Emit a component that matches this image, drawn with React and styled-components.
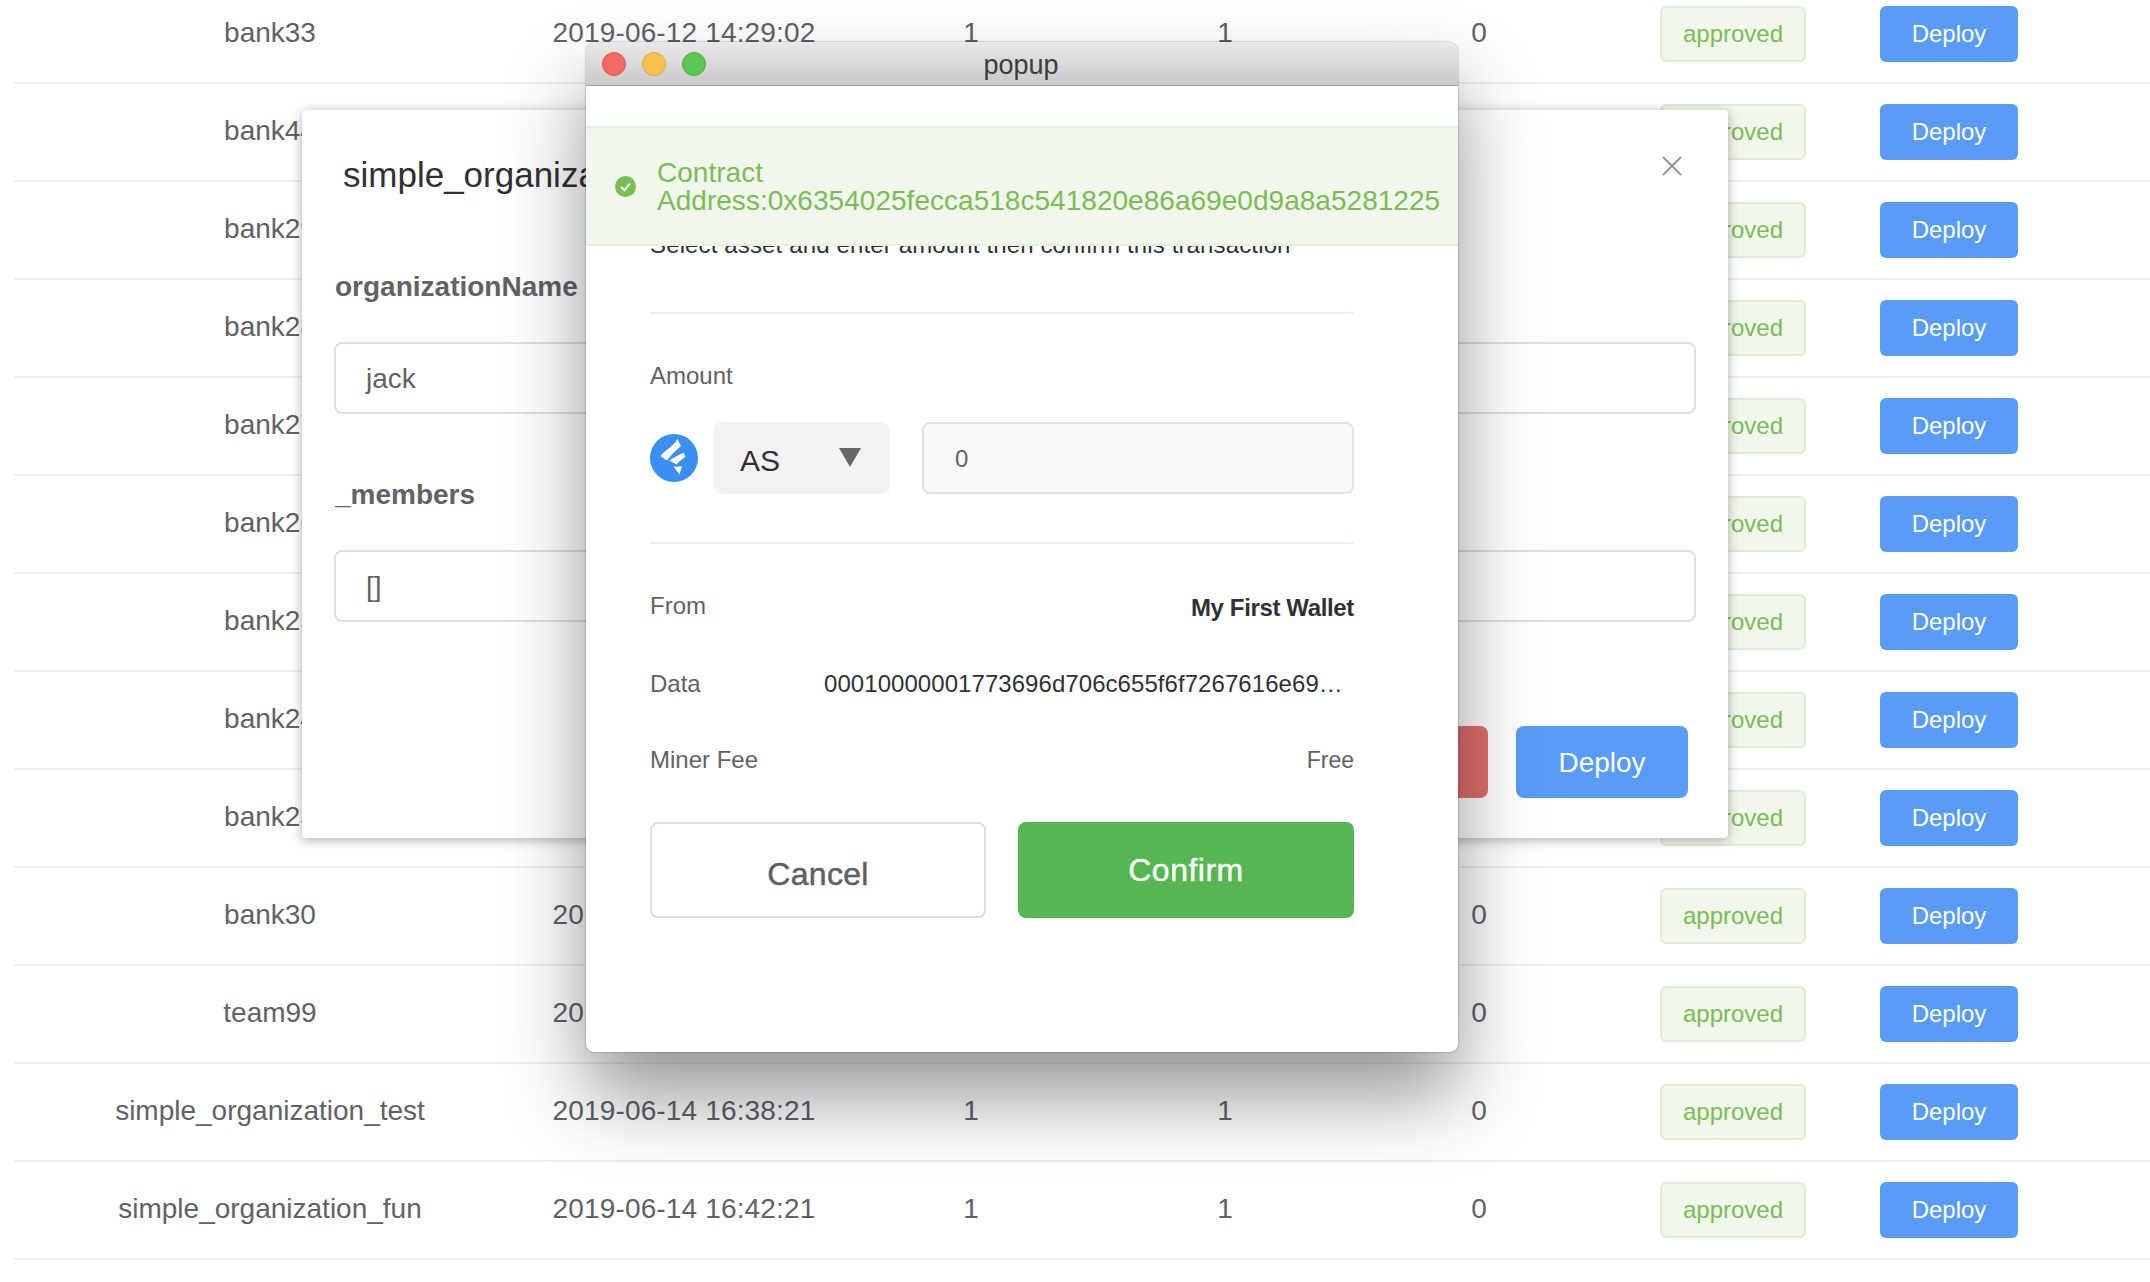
import React from 'react';
import styled, { createGlobalStyle } from 'styled-components';

const Global = createGlobalStyle`
  html, body { margin: 0; padding: 0; background: #fff; overflow: hidden; height: 1282px; }
  * { box-sizing: border-box; }
  body { font-family: "Liberation Sans", Arial, sans-serif; color: #606266; }
`;

const Page = styled.div`
  position: relative;
  width: 2150px;
  height: 1282px;
  overflow: hidden;
`;

const Table = styled.div`
  margin-top: -14px;
  padding-left: 14px;
`;

const Row = styled.div`
  display: grid;
  grid-template-columns: 512px 316px 258px 250px 258px 250px 182px 1fr;
  align-items: center;
  height: 98px;
  border-bottom: 2px solid #ebeef5;
  font-size: 28px;
  color: #606266;
`;

const Cell = styled.div`
  text-align: center;
  white-space: nowrap;
  padding-bottom: 2px;
`;

const DateCell = styled(Cell)`
  letter-spacing: 0.15px;
`;

const Badge = styled.div`
  justify-self: center;
  width: 146px;
  height: 56px;
  border: 2px solid #ddeed2;
  border-radius: 6px;
  background: #f1f7ec;
  color: #7abd53;
  font-size: 24px;
  display: flex;
  align-items: center;
  justify-content: center;
`;

const SmallDeploy = styled.div`
  justify-self: center;
  width: 138px;
  height: 56px;
  border-radius: 6px;
  background: #589cf8;
  color: #fff;
  font-size: 24px;
  display: flex;
  align-items: center;
  justify-content: center;
`;

const Dialog = styled.div`
  position: absolute;
  left: 302px;
  top: 110px;
  width: 1426px;
  height: 728px;
  background: #fff;
  border-radius: 4px;
  box-shadow: 0 2px 12px rgba(0, 0, 0, 0.32);
  padding: 40px 32px 0 32px;
  display: flex;
  flex-direction: column;
`;

const DialogTitle = styled.div`
  font-size: 35px;
  line-height: 50px;
  color: #303133;
  padding-left: 9px;
`;

const CloseIcon = styled.svg`
  position: absolute;
  right: 46px;
  top: 46px;
  width: 20px;
  height: 20px;
`;

const FormItem = styled.div`
  display: flex;
  flex-direction: column;
  height: 208px;
`;

const FirstForm = styled.div`
  margin-top: 72px;
  display: flex;
  flex-direction: column;
`;

const FormLabel = styled.div`
  font-size: 28px;
  font-weight: 700;
  line-height: 30px;
  height: 70px;
  padding-left: 1px;
  color: #606266;
`;

const TextField = styled.div`
  height: 72px;
  border: 2px solid #dcdfe6;
  border-radius: 8px;
  padding: 2px 0 0 30px;
  font-size: 28px;
  display: flex;
  align-items: center;
  color: #606266;
`;

const DialogFooter = styled.div`
  position: absolute;
  right: 40px;
  top: 616px;
  display: flex;
  gap: 28px;
`;

const DialogButton = styled.div`
  width: 172px;
  height: 72px;
  border-radius: 8px;
  background: ${(p) => p.$bg};
  color: #fff;
  font-size: 28px;
  padding-top: 2px;
  display: flex;
  align-items: center;
  justify-content: center;
`;

const Popup = styled.div`
  position: absolute;
  left: 586px;
  top: 42px;
  width: 872px;
  height: 1010px;
  background: #fff;
  border-radius: 10px 10px 8px 8px;
  box-shadow: 0 44px 80px 0 rgba(0, 0, 0, 0.42), 0 0 2px rgba(0, 0, 0, 0.45);
  display: flex;
  flex-direction: column;
`;

const TitleBar = styled.div`
  position: relative;
  height: 44px;
  flex: none;
  border-radius: 10px 10px 0 0;
  border-bottom: 1px solid #9d9d9d;
  background: linear-gradient(#e9e9e9, #c9c9c9);
  padding: 3px 2px 0 0;
  display: flex;
  align-items: center;
  justify-content: center;
  font-size: 27px;
  color: #3c3c3c;
`;

const Lights = styled.div`
  position: absolute;
  left: 16px;
  top: 10px;
  display: flex;
  gap: 16px;
`;

const Light = styled.span`
  width: 24px;
  height: 24px;
  border-radius: 50%;
  background: ${(p) => p.$c};
  border: 1px solid ${(p) => p.$b};
`;

const Alert = styled.div`
  position: absolute;
  left: 0;
  top: 84px;
  width: 100%;
  height: 120px;
  background: #f1f7ec;
  border-top: 2px solid #e1f3d8;
  border-bottom: 2px solid #e1f3d8;
  display: flex;
  align-items: center;
  padding-left: 29px;
  gap: 21px;
  color: #7abd53;
  font-size: 28px;
  line-height: 28px;
  letter-spacing: 0.03px;
`;

const AlertText = styled.div`
  width: 800px;
  padding-top: 2px;
`;

const Content = styled.div`
  padding: 0 104px 0 64px;
  display: flex;
  flex-direction: column;
`;

const Hint = styled.div`
  margin-top: 144px;
  font-size: 24px;
  line-height: 30px;
  letter-spacing: 0.14px;
  color: #303133;
  white-space: nowrap;
`;

const Divider = styled.div`
  height: 2px;
  background: #ebeef5;
  margin-top: ${(p) => p.$top}px;
`;

const AmountLabel = styled.div`
  margin-top: 48px;
  font-size: 24px;
  line-height: 28px;
  color: #606266;
`;

const AmountRow = styled.div`
  margin-top: 32px;
  display: flex;
  align-items: center;
`;

const Coin = styled.svg`
  width: 48px;
  height: 48px;
  flex: none;
`;

const AssetSelect = styled.div`
  margin-left: 16px;
  width: 176px;
  height: 72px;
  background: #f2f2f2;
  border-radius: 8px;
  position: relative;
  padding: 8px 0 0 26px;
  font-size: 30px;
  line-height: 62px;
  color: #303133;
`;

const Caret = styled.svg`
  position: absolute;
  left: 125px;
  top: 26px;
  width: 22px;
  height: 19px;
`;

const AmountInput = styled.div`
  margin-left: 32px;
  flex: 1;
  height: 72px;
  background: #fafafa;
  border: 2px solid #dfe2e8;
  border-radius: 8px;
  padding: 2px 0 0 31px;
  display: flex;
  align-items: center;
  font-size: 24px;
  color: #606266;
`;

const InfoRow = styled.div`
  display: flex;
  justify-content: space-between;
  align-items: center;
  height: 28px;
  margin-top: ${(p) => p.$top}px;
  font-size: 24px;
  color: #606266;
`;

const Strong = styled.span`
  font-weight: 700;
  letter-spacing: -0.36px;
  color: #303133;
  padding-top: 4px;
`;

const DataValue = styled.span`
  width: 530px;
  padding-right: 10px;
  letter-spacing: 0.06px;
  overflow: hidden;
  text-overflow: ellipsis;
  white-space: nowrap;
  color: #303133;
`;

const FreeValue = styled.span`
  font-size: 23px;
`;

const Buttons = styled.div`
  margin-top: 48px;
  display: flex;
  gap: 32px;
`;

const CancelButton = styled.div`
  flex: 0 0 336px;
  height: 96px;
  border: 2px solid #dcdcdc;
  border-radius: 8px;
  padding-top: 8px;
  display: flex;
  align-items: center;
  justify-content: center;
  font-size: 32px;
  letter-spacing: 0.3px;
  -webkit-text-stroke: 0.5px #606060;
  color: #606060;
`;

const ConfirmButton = styled.div`
  flex: 0 0 336px;
  height: 96px;
  border-radius: 8px;
  background: #56b652;
  display: flex;
  align-items: center;
  justify-content: center;
  font-size: 32px;
  letter-spacing: 0.5px;
  -webkit-text-stroke: 0.4px #fff;
  color: #fff;
`;

const rows = [
  ['bank33', '2019-06-12 14:29:02'],
  ['bank44', '2019-06-12 14:31:10'],
  ['bank29', '2019-06-12 14:35:22'],
  ['bank28', '2019-06-12 14:38:41'],
  ['bank27', '2019-06-12 14:42:05'],
  ['bank26', '2019-06-12 14:45:37'],
  ['bank25', '2019-06-12 14:49:12'],
  ['bank24', '2019-06-12 14:53:48'],
  ['bank23', '2019-06-12 14:57:26'],
  ['bank30', '2019-06-12 15:02:33'],
  ['team99', '2019-06-13 10:16:54'],
  ['simple_organization_test', '2019-06-14 16:38:21'],
  ['simple_organization_fun', '2019-06-14 16:42:21'],
];

export default function App() {
  return (
    <Page>
      <Global />
      <Table>
        {rows.map(([name, date]) => (
          <Row key={name}>
            <Cell>{name}</Cell>
            <DateCell>{date}</DateCell>
            <Cell>1</Cell>
            <Cell>1</Cell>
            <Cell>0</Cell>
            <Badge>approved</Badge>
            <SmallDeploy>Deploy</SmallDeploy>
          </Row>
        ))}
      </Table>

      <Dialog>
        <DialogTitle>simple_organization</DialogTitle>
        <CloseIcon viewBox="0 0 20 20" fill="none" stroke="#909399" strokeWidth="1.8">
          <path d="M1 1 L19 19 M19 1 L1 19" />
        </CloseIcon>
        <FirstForm>
          <FormItem>
            <FormLabel>organizationName</FormLabel>
            <TextField>jack</TextField>
          </FormItem>
          <FormItem>
            <FormLabel>_members</FormLabel>
            <TextField>[]</TextField>
          </FormItem>
        </FirstForm>
        <DialogFooter>
          <DialogButton $bg="#e36f6c">Cancel</DialogButton>
          <DialogButton $bg="#589cf8">Deploy</DialogButton>
        </DialogFooter>
      </Dialog>

      <Popup>
        <TitleBar>
          <Lights>
            <Light $c="#f16a62" $b="#e0584f" />
            <Light $c="#f8c04e" $b="#e2a83e" />
            <Light $c="#5cc652" $b="#4db044" />
          </Lights>
          popup
        </TitleBar>
        <Alert>
          <svg width="21" height="21" viewBox="0 0 21 21">
            <circle cx="10.5" cy="10.5" r="10.5" fill="#7abd53" />
            <path d="M6 11 L9.4 14.2 L15 7.6" fill="none" stroke="#fff" strokeWidth="1.8" />
          </svg>
          <AlertText>Contract Address:0x6354025fecca518c541820e86a69e0d9a8a5281225</AlertText>
        </Alert>
        <Content>
          <Hint>Select asset and enter amount then confirm this transaction</Hint>
          <Divider $top={52} />
          <AmountLabel>Amount</AmountLabel>
          <AmountRow>
            <Coin viewBox="0 0 48 48">
              <circle cx="24" cy="24" r="24" fill="#3a8ff0" />
              <path d="M27.5 5 C29 8 30 10 31 12 C26 16 21 21 17 26.5 L10.5 22 C15 16 24 12 27.5 5 Z" fill="#fff" />
              <path d="M33.5 18.5 L35.5 23 C32 25 29 27.5 26.5 30.5 L19.5 26.5 C24 23 29 21 33.5 18.5 Z" fill="#fff" />
              <path d="M32 32 L29.5 40.5 L23.5 32.5 C26.5 32.8 29.5 32.6 32 32 Z" fill="#fff" />
            </Coin>
            <AssetSelect>
              AS
              <Caret viewBox="0 0 22 19">
                <path d="M0 0 H22 L11 19 Z" fill="#666" />
              </Caret>
            </AssetSelect>
            <AmountInput>0</AmountInput>
          </AmountRow>
          <Divider $top={48} />
          <InfoRow $top={48}>
            From
            <Strong>My First Wallet</Strong>
          </InfoRow>
          <InfoRow $top={50}>
            Data
            <DataValue>00010000001773696d706c655f6f7267616e697a6174696f6e</DataValue>
          </InfoRow>
          <InfoRow $top={48}>
            Miner Fee
            <FreeValue>Free</FreeValue>
          </InfoRow>
          <Buttons>
            <CancelButton>Cancel</CancelButton>
            <ConfirmButton>Confirm</ConfirmButton>
          </Buttons>
        </Content>
      </Popup>
    </Page>
  );
}
